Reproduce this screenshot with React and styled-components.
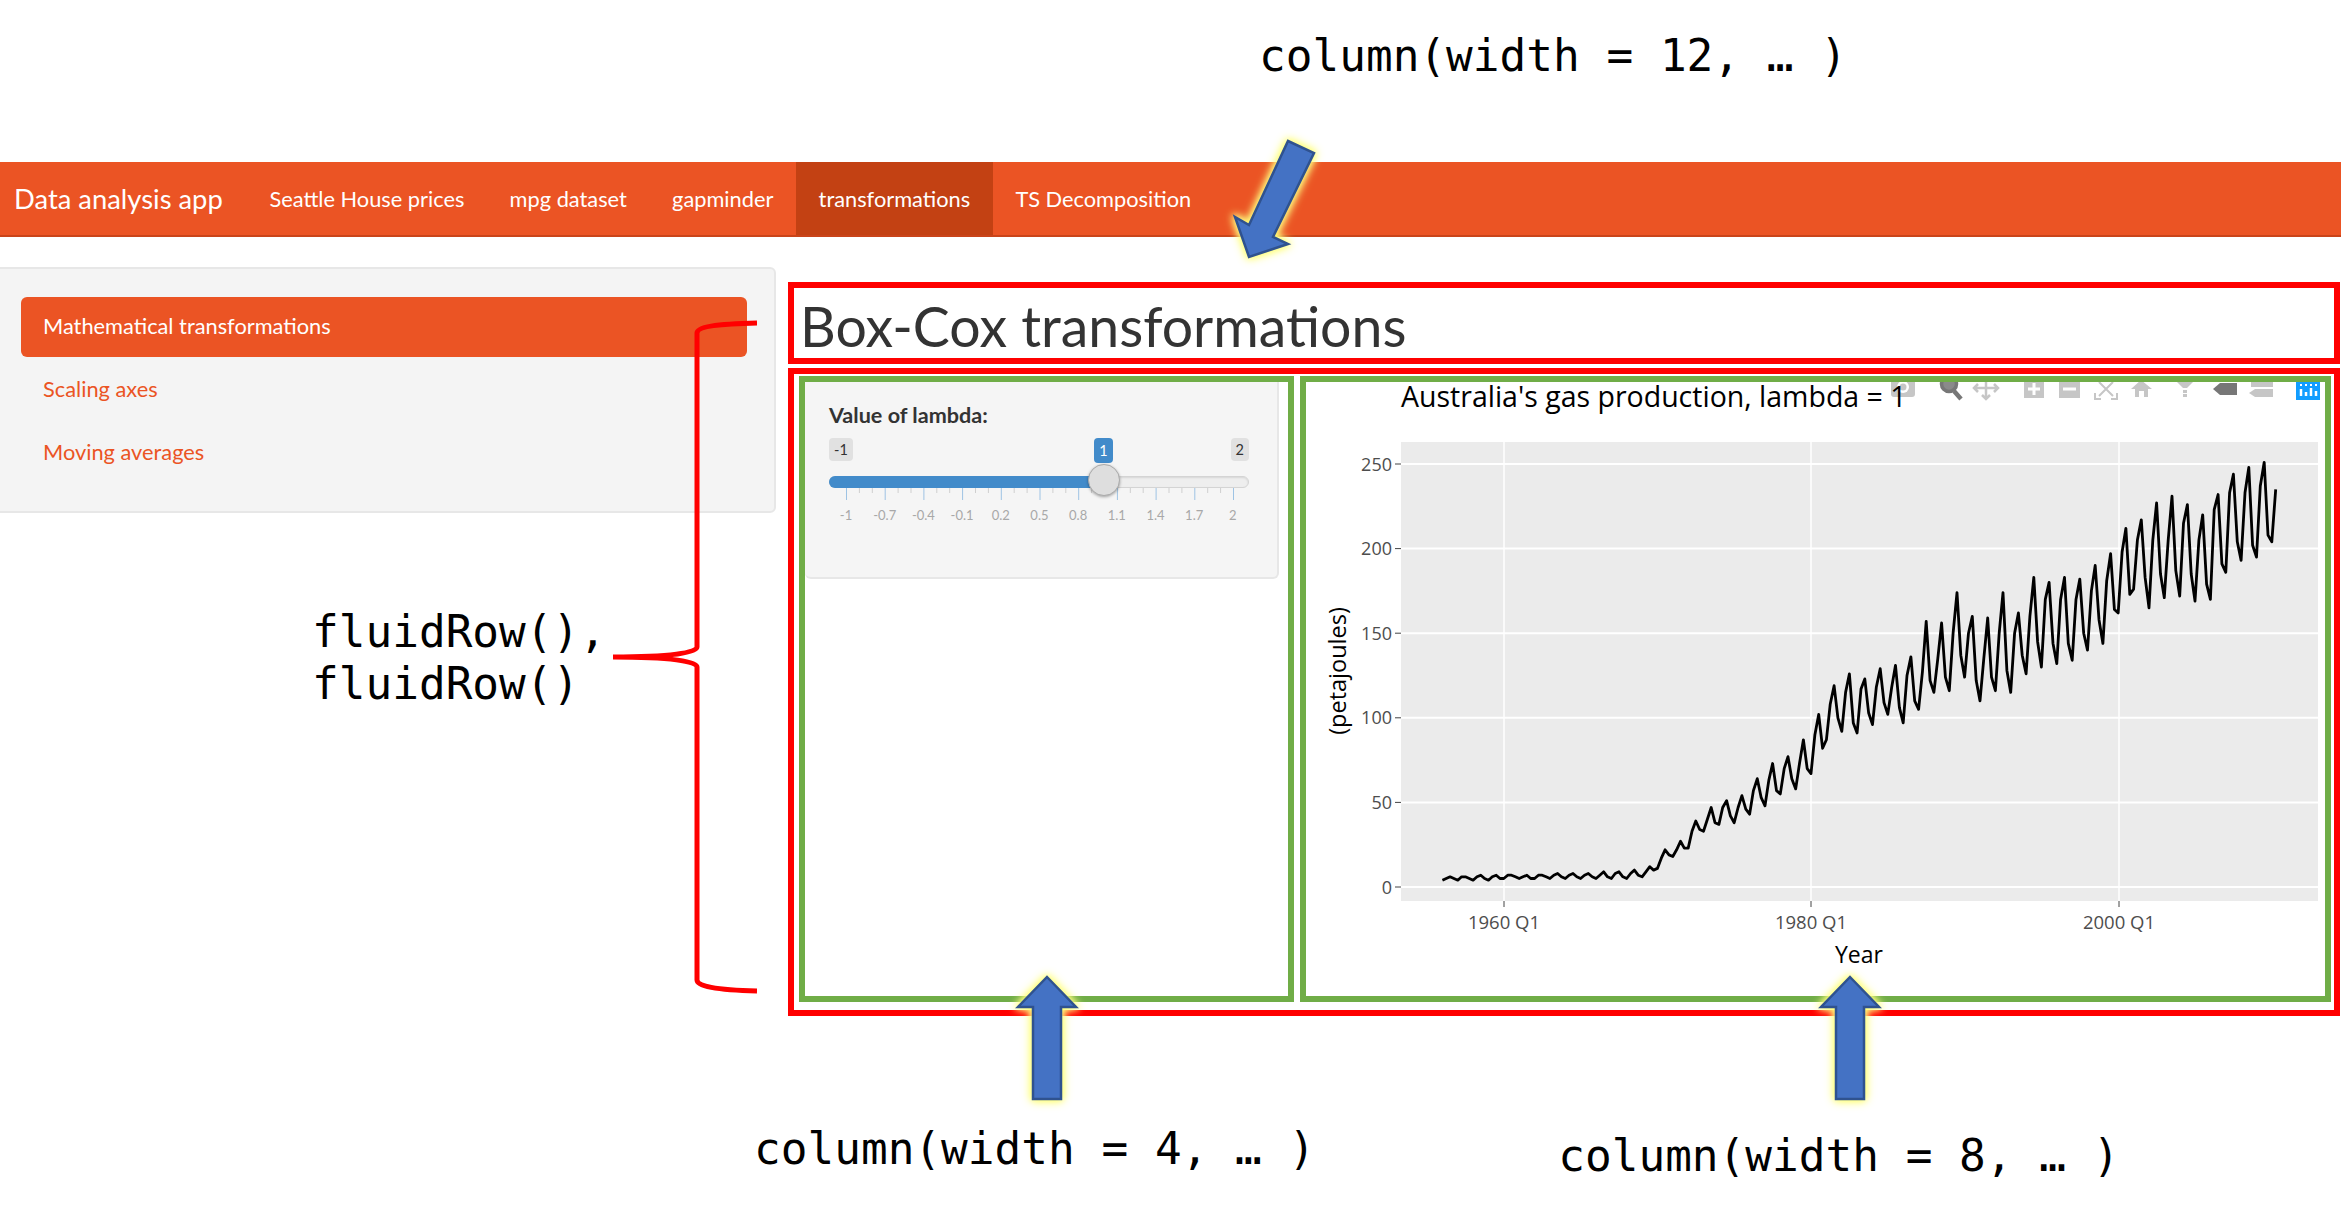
import React from 'react';
import styled, { createGlobalStyle } from 'styled-components';

const UI_FONT = `Lato, 'Open Sans', sans-serif`;
const MONO_FONT = `'DejaVu Sans Mono', 'Liberation Mono', monospace`;
const ORANGE = '#eb5424';

const navItems = ['Seattle House prices', 'mpg dataset', 'gapminder', 'transformations', 'TS Decomposition'];
const sideItems = ['Mathematical transformations', 'Scaling axes', 'Moving averages'];
const sliderLabels = ['-1', '-0.7', '-0.4', '-0.1', '0.2', '0.5', '0.8', '1.1', '1.4', '1.7', '2'];

// quarterly values by year, read off the plot, starting 1956 Q1
const gas = [
  4, 5, 6, 5, 4, 6, 6, 5, 4, 6, 7, 5, 4, 6, 7, 5, 5, 7, 7, 6, 5, 6, 7, 5, 5, 7, 7, 6, 5, 7, 8, 6,
  5, 7, 8, 6, 5, 7, 8, 6, 5, 7, 9, 6, 5, 8, 9, 6, 5, 8, 10, 7, 6, 9, 12, 10, 11, 17, 22, 19,
  18, 22, 27, 23, 23, 33, 39, 34, 33, 40, 47, 38, 37, 47, 51, 42, 38, 47, 54, 46, 43, 57, 64, 53,
  48, 63, 73, 57, 55, 70, 77, 64, 58, 73, 87, 70, 67, 90, 102, 82, 87, 108, 119, 100, 92, 115, 126, 97,
  91, 117, 123, 103, 96, 118, 129, 109, 102, 118, 131, 106, 97, 125, 136, 110, 105, 127, 157, 122,
  115, 135, 156, 124, 116, 150, 174, 137, 124, 150, 160, 122, 110, 135, 159, 124, 116, 150, 174, 128,
  115, 150, 162, 137, 126, 160, 183, 145, 130, 170, 180, 144, 132, 170, 183, 144, 134, 170, 182, 150,
  140, 175, 190, 158, 144, 181, 197, 164, 162, 198, 212, 173, 176, 205, 217, 183, 165, 205, 227, 185,
  171, 205, 231, 187, 172, 215, 226, 185, 169, 205, 220, 179, 170, 223, 232, 191, 186, 233, 244, 204,
  193, 233, 248, 202, 195, 237, 251, 208, 204, 235,
];

const yTicks = [0, 50, 100, 150, 200, 250];
const xTicks = [
  { x: 1503, label: '1960 Q1' },
  { x: 1810, label: '1980 Q1' },
  { x: 2118, label: '2000 Q1' },
];
const valueY = (v) => 887 - v * 1.692;
const gasPoints = gas.map((v, i) => `${(1441.4 + 3.84 * i).toFixed(1)},${valueY(v).toFixed(1)}`).join(' ');

const GlobalStyle = createGlobalStyle`
  html, body { margin: 0; padding: 0; background: #fff; }
  body { font-family: ${UI_FONT}; }
`;

const Page = styled.div`
  position: relative;
  width: 2341px;
  height: 1225px;
  overflow: hidden;
  background: #fff;
  color: #333;
`;

const Caption = styled.div`
  font-family: ${MONO_FONT};
  font-size: 44.4px;
  line-height: 52px;
  color: #000;
  white-space: pre;
`;

const TopArea = styled.div`
  height: 162px;
  box-sizing: border-box;
  padding: 30px 0 0 1259px;
`;

const Navbar = styled.nav`
  height: 75px;
  box-sizing: border-box;
  display: flex;
  background: ${ORANGE};
  border-bottom: 2px solid #c9441a;
  color: #fff;
`;

const Brand = styled.div`
  display: flex;
  align-items: center;
  padding: 0 24px 0 14px;
  font-size: 27.4px;
`;

const NavItem = styled.div`
  display: flex;
  align-items: center;
  padding: 0 22.6px;
  font-size: 21.8px;
  background: ${(p) => (p.$active ? '#c34113' : 'transparent')};
`;

const Body = styled.div`
  display: flex;
  align-items: flex-start;
  margin-top: 30px;
`;

const LeftColumn = styled.div`
  width: 776px;
  flex: none;
`;

const SideWell = styled.div`
  box-sizing: border-box;
  height: 246px;
  margin-left: -10px;
  padding: 28px 27px 0 29px;
  display: flex;
  flex-direction: column;
  gap: 3px;
  background: #f4f4f4;
  border: 2px solid #e7e7e7;
  border-radius: 6px;
`;

const SideItem = styled.div`
  box-sizing: border-box;
  height: 60px;
  display: flex;
  align-items: center;
  padding: 0 0 3px 22px;
  font-size: 21.8px;
  border-radius: 6px;
  color: ${(p) => (p.$active ? '#fff' : ORANGE)};
  background: ${(p) => (p.$active ? ORANGE : 'transparent')};
`;

const RowCaption = styled(Caption)`
  margin-top: 93px;
  padding-left: 312px;
`;

const RightColumn = styled.div`
  width: 1552px;
  margin: 15px 0 0 12px;
  flex: none;
  display: flex;
  flex-direction: column;
  gap: 4px;
`;

const TitleBox = styled.div`
  box-sizing: border-box;
  height: 82px;
  border: 6px solid #f00;
  display: flex;
  align-items: center;
  padding: 4px 0 0 6px;
`;

const Title = styled.h2`
  margin: 0;
  font-size: 55.4px;
  font-weight: 400;
  color: #333;
`;

const RowBox = styled.div`
  box-sizing: border-box;
  height: 648px;
  border: 6px solid #f00;
  padding: 2px 3px 8px 5px;
  display: flex;
  gap: 6px;
`;

const ColumnBox = styled.div`
  box-sizing: border-box;
  height: 100%;
  flex: ${(p) => (p.$wide ? '1' : 'none')};
  width: ${(p) => (p.$wide ? 'auto' : '495px')};
  border: 6px solid #70ad47;
  padding-right: ${(p) => (p.$wide ? '0' : '9px')};
`;

const SliderWell = styled.div`
  box-sizing: border-box;
  height: 197px;
  padding: 19px 28px 0 24px;
  background: #f5f5f5;
  border-right: 2px solid #e7e7e7;
  border-bottom: 2px solid #e7e7e7;
  border-radius: 0 0 6px 6px;
`;

const SliderLabel = styled.div`
  font-size: 21.6px;
  line-height: 28px;
  font-weight: 700;
  color: #333;
`;

const Slider = styled.div`
  position: relative;
  height: 110px;
  margin-top: 9px;
`;

const Badge = styled.span`
  position: absolute;
  top: 0;
  height: 23px;
  box-sizing: border-box;
  padding: 0 5px;
  border-radius: 4px;
  font-size: 14.5px;
  line-height: 23px;
  color: #333;
  background: #e1e1e1;
`;

const ValueBadge = styled(Badge)`
  left: 265px;
  width: 19px;
  height: 25px;
  padding: 0;
  text-align: center;
  line-height: 26px;
  color: #fff;
  background: #428bca;
`;

const Track = styled.div`
  position: absolute;
  top: 38px;
  left: 0;
  right: 0;
  height: 12px;
  border-radius: 6px;
  background: #eee;
  border: 1px solid #d4d4d4;
  box-sizing: border-box;
  box-shadow: inset 0 1px 2px rgba(0, 0, 0, 0.1);
`;

const TrackFill = styled.div`
  position: absolute;
  top: 38px;
  left: 0;
  height: 12px;
  border-radius: 6px 0 0 6px;
  background: #428bca;
`;

const Handle = styled.div`
  position: absolute;
  top: 26px;
  left: 259px;
  box-sizing: border-box;
  width: 32px;
  height: 32px;
  border-radius: 50%;
  background: #dedede;
  border: 1px solid #ababab;
  box-shadow: 0 1px 3px rgba(0, 0, 0, 0.35);
`;

const TickMarks = styled.svg`
  position: absolute;
  top: 50px;
  left: 0;
  display: block;
`;

const TickLabels = styled.div`
  position: absolute;
  top: 69px;
  left: 17px;
  right: 16px;
  display: flex;
  justify-content: space-between;
`;

const TickLabel = styled.span`
  width: 0;
  display: flex;
  justify-content: center;
  font-size: 13px;
  line-height: 16px;
  color: #a8a8a8;
`;

const Chart = styled.svg`
  display: block;
  width: 100%;
  height: 100%;
  overflow: visible;
  text { font-family: 'Open Sans', sans-serif; }
`;

const BottomRow = styled.div`
  display: flex;
  align-items: flex-start;
  gap: 243px;
  margin-top: 107px;
  padding-left: 754px;
`;

const LowerCaption = styled(Caption)`
  margin-top: ${(p) => p.$drop || 0}px;
`;

const Overlay = styled.svg`
  position: absolute;
  inset: 0;
  pointer-events: none;
`;

const Arrow = styled.polygon`
  fill: #4472c4;
  stroke: #2f528f;
  stroke-width: 2.5;
  stroke-linejoin: miter;
  filter: drop-shadow(0 0 4px #ffff70) drop-shadow(0 0 3px #ffff90);
`;

// plotly modebar, cut off by the top of the plot area just as in the shot
function Modebar() {
  const light = '#c6c6c6';
  const dark = '#777';
  return (
    <g clipPath="url(#plot-top)">
      {/* camera */}
      <rect x="1890" y="378" width="24" height="19" rx="3" fill={light} />
      <circle cx="1902" cy="387" r="6" fill="#fff" />
      <circle cx="1902" cy="387" r="3.5" fill={light} />
      {/* zoom */}
      <circle cx="1948" cy="384" r="7.5" fill="#8a8a8a" stroke={dark} strokeWidth="3.5" />
      <path d="M1953 391 L1960 399" stroke={dark} strokeWidth="4.5" />
      {/* pan */}
      <path d="M1973 388 H1997 M1985 378 V398 M1977 384 L1973 388 L1977 392 M1993 384 L1997 388 L1993 392 M1981 395 L1985 399 L1989 395" stroke={light} strokeWidth="2.5" fill="none" />
      {/* zoom in, zoom out */}
      <rect x="2023" y="378" width="20" height="20" fill={light} />
      <path d="M2027 389 H2039 M2033 383 V395" stroke="#fff" strokeWidth="3" />
      <rect x="2058" y="378" width="21" height="20" fill={light} />
      <path d="M2062 389 H2075" stroke="#fff" strokeWidth="3" />
      {/* autoscale */}
      <path d="M2094 393 V399 H2100 M2110 399 H2116 V393 M2098 382 L2112 396 M2112 382 L2098 396" stroke={light} strokeWidth="2" fill="none" />
      {/* home */}
      <path d="M2130 389 L2140 380 L2151 389 H2147 V397 H2143 V391 H2138 V397 H2134 V389 Z" fill={light} />
      {/* spikes */}
      <path d="M2176 382 H2192 L2186 388 H2182 Z" fill={light} />
      <rect x="2182" y="390" width="4" height="3" fill={light} />
      <rect x="2182" y="394" width="4" height="3" fill={light} />
      {/* hover tags */}
      <path d="M2212 389 L2219 383 H2236 V395 H2219 Z" fill={dark} />
      <path d="M2250 380 H2272 V387 H2250 Z" fill={light} />
      <path d="M2248 393 L2254 389 H2272 V397 H2254 Z" fill={light} />
      {/* plotly logo */}
      <rect x="2295" y="378" width="24" height="22" fill="#119dff" />
      <path d="M2300 389 V396 M2305 392 V396 M2310 388 V396 M2315 391 V396" stroke="#fff" strokeWidth="2.5" />
      <path d="M2300 384 V386 M2305 384 V386 M2310 384 V386 M2315 384 V386" stroke="#fff" strokeWidth="2" />
    </g>
  );
}

function GasChart() {
  return (
    <Chart viewBox="1305 382 1019 614" preserveAspectRatio="none">
      <defs>
        <clipPath id="plot-top">
          <rect x="1305" y="382" width="1019" height="30" />
        </clipPath>
      </defs>
      <rect x="1400" y="442" width="917" height="459" fill="#ebebeb" />
      {yTicks.map((t) => (
        <g key={t}>
          <line x1="1400" x2="2317" y1={valueY(t)} y2={valueY(t)} stroke="#fff" strokeWidth="2" />
          <line x1="1394" x2="1400" y1={valueY(t)} y2={valueY(t)} stroke="#444" strokeWidth="1" />
          <text x="1391" y={valueY(t) + 6.5} fontSize="18" textAnchor="end" fill="#4d4d4d">{t}</text>
        </g>
      ))}
      {xTicks.map((t) => (
        <g key={t.x}>
          <line x1={t.x} x2={t.x} y1="442" y2="901" stroke="#fff" strokeWidth="1.5" />
          <line x1={t.x} x2={t.x} y1="901" y2="907" stroke="#444" strokeWidth="1" />
          <text x={t.x} y="929" fontSize="18.5" textAnchor="middle" fill="#4d4d4d">{t.label}</text>
        </g>
      ))}
      <polyline points={gasPoints} fill="none" stroke="#000" strokeWidth="2.8" strokeLinejoin="round" />
      <Modebar />
      <text x="1400" y="407" fontSize="28.5" fill="#000">Australia's gas production, lambda = 1</text>
      <text x="1858" y="963" fontSize="23" textAnchor="middle" fill="#000">Year</text>
      <text transform="translate(1345 671) rotate(-90)" fontSize="23.5" textAnchor="middle" fill="#000">(petajoules)</text>
    </Chart>
  );
}

function SliderTicks() {
  const marks = [];
  for (let i = 0; i <= 30; i += 1) {
    const x = 17.5 + (i * 387) / 30;
    const major = i % 3 === 0;
    marks.push(
      <line key={i} x1={x} x2={x} y1="0" y2={major ? 12 : 5} stroke={major ? '#9ec3e4' : '#cfcfcf'} strokeWidth="1" />
    );
  }
  return (
    <TickMarks width="420" height="13">
      {marks}
    </TickMarks>
  );
}

export default function App() {
  return (
    <Page>
      <GlobalStyle />
      <TopArea>
        <Caption>column(width = 12, … )</Caption>
      </TopArea>

      <Navbar>
        <Brand>Data analysis app</Brand>
        {navItems.map((item) => (
          <NavItem key={item} $active={item === 'transformations'}>{item}</NavItem>
        ))}
      </Navbar>

      <Body>
        <LeftColumn>
          <SideWell>
            {sideItems.map((item, i) => (
              <SideItem key={item} $active={i === 0}>{item}</SideItem>
            ))}
          </SideWell>
          <RowCaption>{'fluidRow(),\nfluidRow()'}</RowCaption>
        </LeftColumn>

        <RightColumn>
          <TitleBox>
            <Title>Box-Cox transformations</Title>
          </TitleBox>
          <RowBox>
            <ColumnBox>
              <SliderWell>
                <SliderLabel>Value of lambda:</SliderLabel>
                <Slider>
                  <Badge style={{ left: 0 }}>-1</Badge>
                  <ValueBadge>1</ValueBadge>
                  <Badge style={{ right: 0 }}>2</Badge>
                  <Track />
                  <TrackFill style={{ width: `${(2 / 3) * 100 - 1.8}%` }} />
                  <SliderTicks />
                  <TickLabels>
                    {sliderLabels.map((l) => (
                      <TickLabel key={l}>{l}</TickLabel>
                    ))}
                  </TickLabels>
                  <Handle />
                </Slider>
              </SliderWell>
            </ColumnBox>
            <ColumnBox $wide>
              <GasChart />
            </ColumnBox>
          </RowBox>
        </RightColumn>
      </Body>

      <BottomRow>
        <LowerCaption>column(width = 4, … )</LowerCaption>
        <LowerCaption $drop={7}>column(width = 8, … )</LowerCaption>
      </BottomRow>

      {/* annotation arrows and the brace, drawn on top of the page */}
      <Overlay width="2341" height="1225" viewBox="0 0 2341 1225">
        <path
          d="M757 323 C715 324 697 327 697 333 V647 C697 653 670 657 613 657 C670 657 697 661 697 667 V980 C697 986 715 990 757 991"
          fill="none"
          stroke="#f00"
          strokeWidth="5"
        />
        <Arrow points="1288,141 1314,153 1273,237 1288,244 1249,257 1235,217 1249,225" />
        <Arrow points="1047,977 1076,1007 1061,1007 1061,1099 1033,1099 1033,1007 1018,1007" />
        <Arrow points="1850,977 1879,1007 1864,1007 1864,1099 1836,1099 1836,1007 1821,1007" />
      </Overlay>
    </Page>
  );
}
